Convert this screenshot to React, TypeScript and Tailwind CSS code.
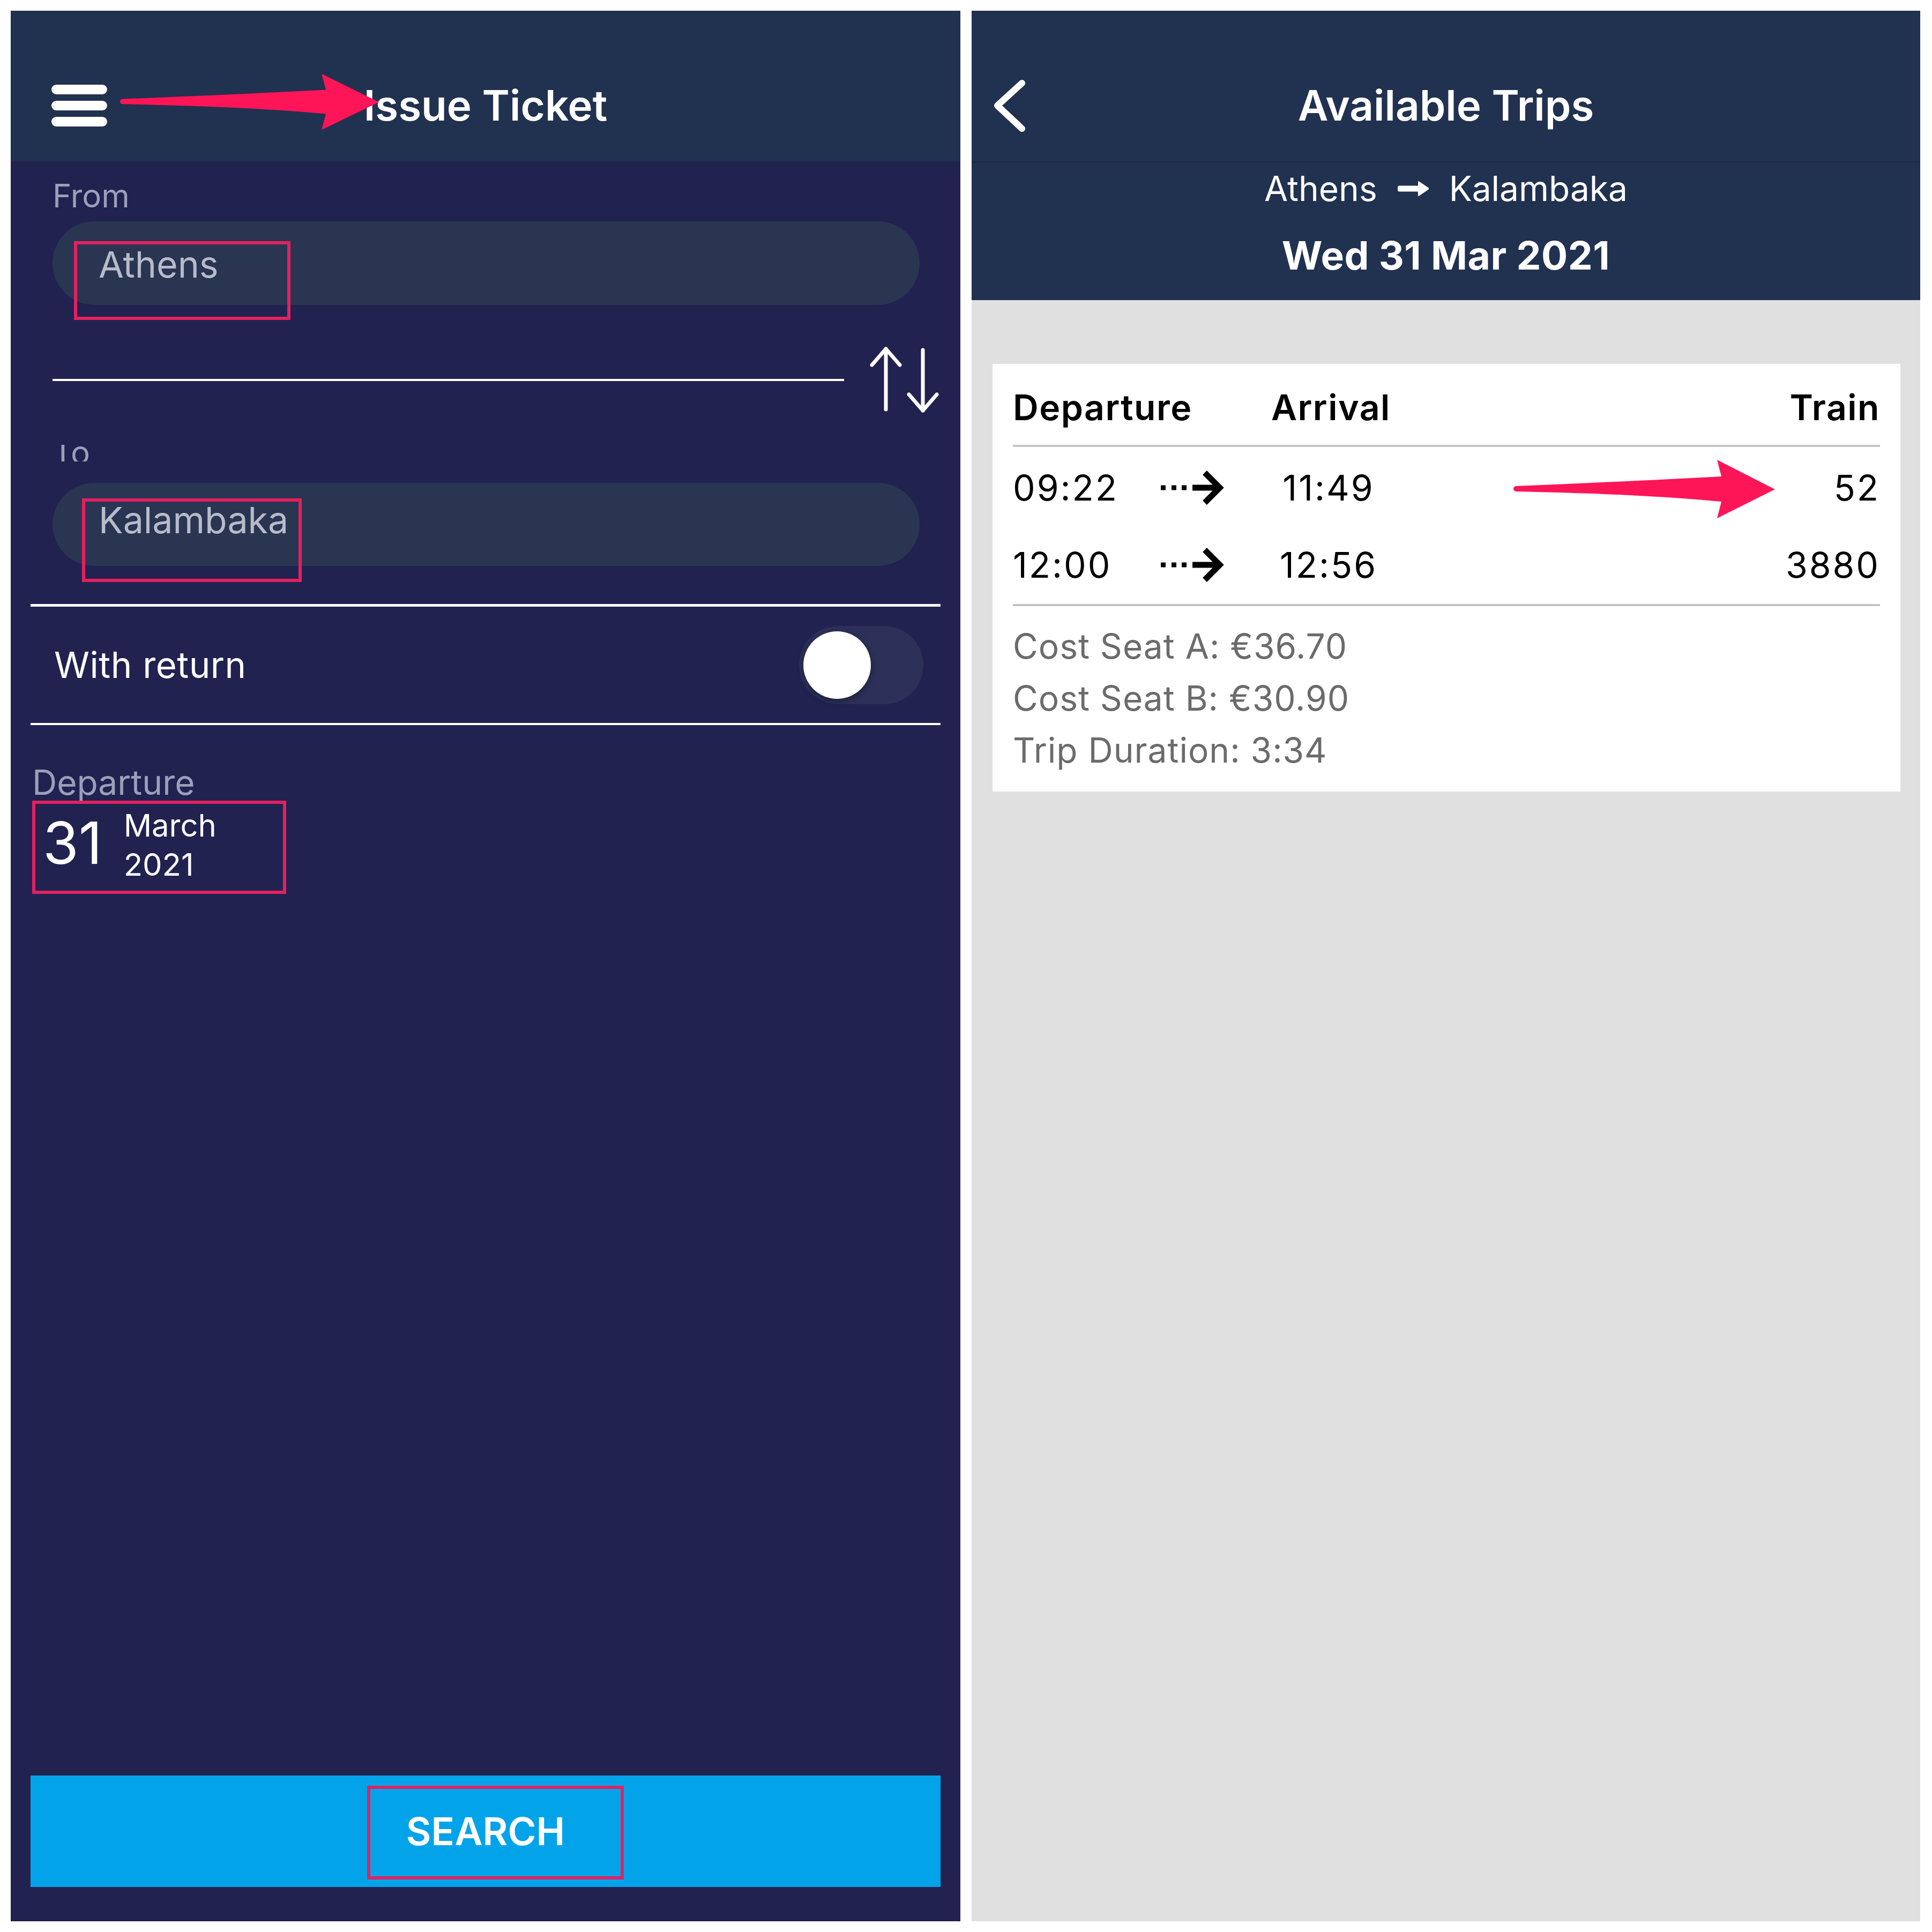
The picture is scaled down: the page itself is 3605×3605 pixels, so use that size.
const PINK_BOX = "#e2215f";

function SkitchArrow({ className }: { className: string }) {
  return (
    <svg className={className} viewBox="0 0 500 125" preserveAspectRatio="none">
      <path
        d="M9 57 Q 250 47 392 39 L 384 8 L 492 63 L 384 117 L 392 86 Q 250 72 9 67 A 5 5 0 0 1 9 57 Z"
        fill="#fd1558"
      />
    </svg>
  );
}

function DotArrow() {
  return (
    <svg className="w-[120px] h-[64px]" viewBox="0 0 120 64">
      <rect x="0" y="27.5" width="9" height="9" fill="black" />
      <rect x="20" y="27.5" width="9" height="9" fill="black" />
      <rect x="39" y="27.5" width="9" height="9" fill="black" />
      <rect x="59" y="26.5" width="50" height="11" fill="black" />
      <path d="M82 4 L110 32 L82 60" stroke="black" strokeWidth="11" fill="none" />
    </svg>
  );
}

function Toggle() {
  return (
    <div className="w-[232px] h-[146px] rounded-full bg-[#2d3058] flex items-center pl-[8px]">
      <div className="w-[126px] h-[126px] rounded-full bg-white shadow-[0_4px_14px_rgba(0,0,0,0.35)]" />
    </div>
  );
}

function IssueTicket() {
  return (
    <div className="w-[1772px] h-[3565px] flex flex-col bg-[#21224f]">
      <div className="h-[281px] shrink-0 bg-[#213150] pt-[72px] grid grid-cols-[1fr_auto_1fr] items-center">
        <div className="ml-[76px] w-[104px] flex flex-col gap-[12px]">
          <div className="h-[18px] rounded-full bg-white" />
          <div className="h-[18px] rounded-full bg-white" />
          <div className="h-[18px] rounded-full bg-white" />
        </div>
        <h1 className="text-[78px] leading-none font-semibold text-white">Issue Ticket</h1>
        <div />
      </div>

      <div className="flex-1 flex flex-col">
        <div className="pl-[78px]">
          <p className="mt-[34px] text-[60px] leading-none text-[#9c9fba]">From</p>
          <div className="relative mt-[18px] h-[156px] w-[1618px] rounded-full bg-[#2a3552] pl-[86px] pt-[46px]">
            <p className="text-[68px] leading-none text-[#b7bbca]">Athens</p>
            <div className="absolute left-[40px] top-[37px] w-[404px] h-[147px] border-[6px] border-[#e2215f]" />
          </div>

          <div className="mt-[76px] h-[127px] flex items-center">
            <div className="w-[1477px] h-[4px] bg-white" />
            <svg className="ml-[45px] w-[140px] h-[127px]" viewBox="0 0 140 127">
              <g stroke="white" strokeWidth="7" fill="none" strokeLinecap="round" strokeLinejoin="round">
                <path d="M33 6 L33 119" />
                <path d="M7 36 L33 6 L59 36" />
                <path d="M102 8 L102 121" />
                <path d="M76 91 L102 121 L128 91" />
              </g>
            </svg>
          </div>

          <div className="mt-[58px] h-[31px] overflow-hidden">
            <p className="-mt-[16px] text-[60px] leading-none text-[#9c9fba]">To</p>
          </div>
          <div className="relative mt-[40px] h-[155px] w-[1618px] rounded-full bg-[#2a3552] pl-[86px] pt-[35px]">
            <p className="text-[68px] leading-none text-[#b7bbca]">Kalambaka</p>
            <div className="absolute left-[55px] top-[29px] w-[410px] h-[156px] border-[6px] border-[#e2215f]" />
          </div>
        </div>

        <div className="mx-[37px] mt-[71px] h-[5px] bg-white" />
        <div className="mx-[37px] h-[217px] flex items-center justify-between pl-[44px] pr-[32px]">
          <p className="text-[67px] leading-none tracking-[0.5px] text-white">With return</p>
          <Toggle />
        </div>
        <div className="mx-[37px] h-[4px] bg-white" />

        <p className="ml-[40px] mt-[75px] text-[64px] leading-none text-[#9c9fba]">Departure</p>
        <div
          className="ml-[40px] mt-[2px] w-[474px] h-[174px] border-[6px] flex text-white"
          style={{ borderColor: PINK_BOX }}
        >
          <p className="ml-[14px] mt-[19px] text-[108px] leading-none">31</p>
          <div className="ml-[40px] mt-[4px] flex flex-col text-[58px] leading-[73px]">
            <span>March</span>
            <span>2021</span>
          </div>
        </div>

        <div className="flex-1" />

        <div className="relative mx-[37px] mb-[64px] h-[208px] bg-[#03a3ea] flex items-center justify-center">
          <span className="text-[72px] leading-none font-semibold text-white">SEARCH</span>
          <div className="absolute left-[628px] top-[19px] w-[479px] h-[175px] border-[6px] border-[#e2215f]" />
        </div>
      </div>
    </div>
  );
}

const trips = [
  { dep: "09:22", arr: "11:49", train: "52", mt: "mt-[43px]" },
  { dep: "12:00", arr: "12:56", train: "3880", mt: "mt-[78px]" },
];

function AvailableTrips() {
  return (
    <div className="w-[1770px] h-[3565px] flex flex-col bg-[#e0e0e0]">
      <div className="h-[281px] shrink-0 bg-[#213150] pt-[72px] grid grid-cols-[1fr_auto_1fr] items-center">
        <svg className="ml-[36px] w-[70px] h-[110px]" viewBox="0 0 70 110">
          <path
            d="M58 13 L12 55 L58 98"
            stroke="white"
            strokeWidth="12"
            strokeLinecap="round"
            strokeLinejoin="round"
            fill="none"
          />
        </svg>
        <h1 className="text-[78px] leading-none font-semibold text-white">Available Trips</h1>
        <div />
      </div>
      <div className="h-[2px] bg-[#1a2744]" />
      <div className="h-[257px] shrink-0 bg-[#213150] flex flex-col items-center text-white">
        <div className="mt-[17px] flex items-center gap-[38px] text-[64px] leading-none">
          <span>Athens</span>
          <svg className="w-[58px] h-[30px]" viewBox="0 0 58 30">
            <rect x="0" y="9.5" width="44" height="11" rx="3" fill="white" />
            <path d="M39 2 L58 15 L39 28 Z" fill="white" strokeLinejoin="round" stroke="white" strokeWidth="2" />
          </svg>
          <span>Kalambaka</span>
        </div>
        <p className="mt-[56px] text-[73px] leading-none font-bold tracking-[0.5px]">Wed 31 Mar 2021</p>
      </div>

      <div className="ml-[39px] mt-[119px] w-[1694px] bg-white px-[38px] pt-[48px] pb-[29px] text-black">
        <div className="grid grid-cols-[482px_214px_1fr] text-[66px] leading-none font-semibold tracking-[1.5px]">
          <span>Departure</span>
          <span className="text-center">Arrival</span>
          <span className="text-right">Train</span>
        </div>
        <div className="mt-[37px] h-[4px] bg-[#c4c4c4]" />
        {trips.map((t) => (
          <div
            key={t.dep}
            className={`${t.mt} grid grid-cols-[482px_214px_1fr] items-center text-[66px] leading-none tracking-[3px]`}
          >
            <div className="flex items-center">
              <span className="w-[276px]">{t.dep}</span>
              <DotArrow />
            </div>
            <span className="text-center">{t.arr}</span>
            <span className="text-right">{t.train}</span>
          </div>
        ))}
        <div className="mt-[40px] h-[4px] bg-[#c4c4c4]" />
        <div className="mt-[26px] text-[64px] leading-[97px] tracking-[1px] text-[#6b6b6b]">
          <p>Cost Seat A: €36.70</p>
          <p>Cost Seat B: €30.90</p>
          <p>Trip Duration: 3:34</p>
        </div>
      </div>
    </div>
  );
}

export default function App() {
  return (
    <div className="relative w-[3605px] h-[3605px] bg-white flex gap-[21px] pl-[20px] pt-[20px] font-['Inter',sans-serif]">
      <IssueTicket />
      <AvailableTrips />
      <SkitchArrow className="absolute left-[220px] top-[130px] w-[495px] h-[120px]" />
      <SkitchArrow className="absolute left-[2820px] top-[850px] w-[500px] h-[125px]" />
    </div>
  );
}
